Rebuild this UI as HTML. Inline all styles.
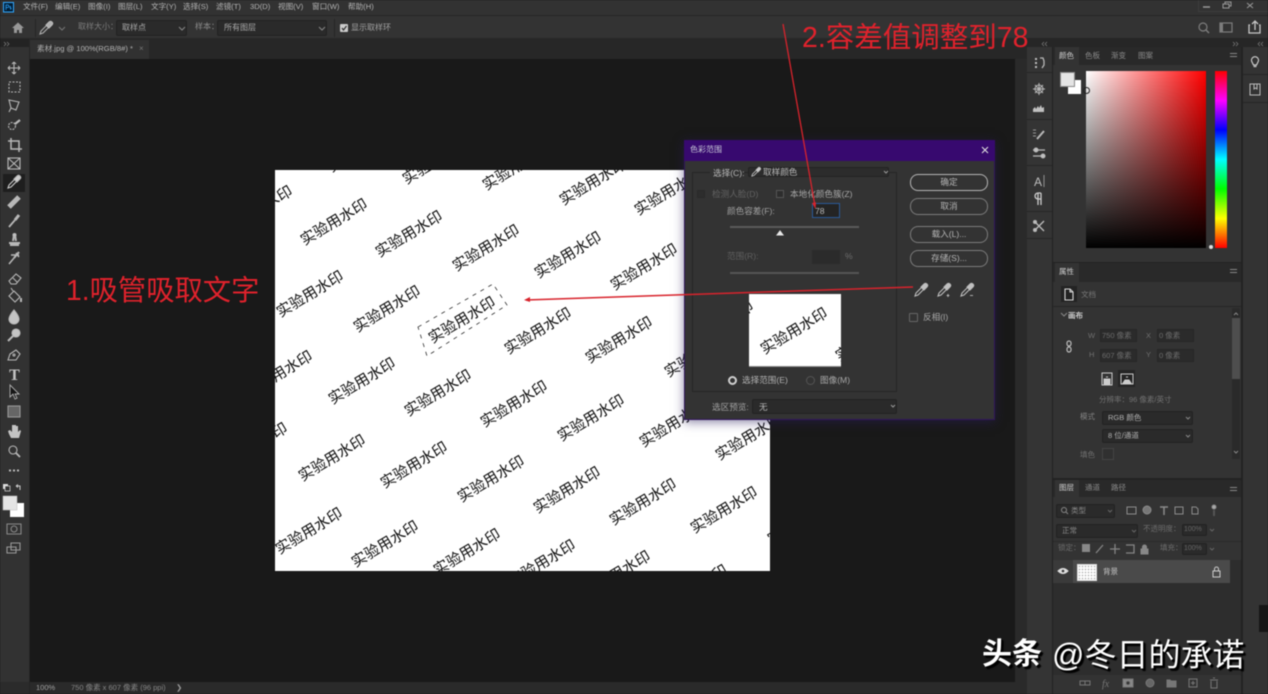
<!DOCTYPE html>
<html lang="zh"><head><meta charset="utf-8"><title>Photoshop 色彩范围</title>
<style>
html,body{margin:0;padding:0;background:#191919;}
body{width:1268px;height:694px;overflow:hidden;position:relative;font-family:"Liberation Sans","Noto Sans CJK SC",sans-serif;}
#r{position:absolute;left:0;top:0;width:1268px;height:694px;overflow:hidden;filter:blur(.4px);}
.b{position:absolute;box-sizing:border-box;}
.t{position:absolute;white-space:nowrap;line-height:12px;font-size:8px;color:#a8a8a8;}
.d{font-size:8.6px;}
.m{color:#b4b4b4;font-size:7.6px;top:1px;}
.s{position:absolute;box-sizing:border-box;background:#2a2a2a;border:1px solid #222;border-radius:2px;}
.btn{position:absolute;box-sizing:border-box;left:910px;width:78px;height:17px;border:1px solid #7c7c7c;border-radius:8px;text-align:center;line-height:15px;font-size:8.6px;color:#b4b4b4;}
.f{position:absolute;box-sizing:border-box;background:#2b2b2b;border:1px solid #262626;}
svg{position:absolute;left:0;top:0;}
</style></head><body><div id="r">

<!-- top bars -->
<div class="b" style="left:0;top:0;width:1268px;height:15px;background:#323232"></div>
<div class="b" style="left:0;top:15px;width:1268px;height:1px;background:#262626"></div>
<div class="b" style="left:0;top:16px;width:1268px;height:23px;background:#333"></div>
<div class="b" style="left:0;top:38px;width:1268px;height:21px;background:#272727"></div>
<div class="b" style="left:30px;top:40px;width:119px;height:19px;background:#313131"></div>
<div class="b" style="left:35px;top:19px;width:1px;height:18px;background:#262626"></div>
<div class="b" style="left:334px;top:19px;width:1px;height:18px;background:#262626"></div>
<div class="b" style="left:1198px;top:0;width:70px;height:12px;border-left:1px solid #3d3d3d;border-bottom:1px solid #3d3d3d"></div>

<!-- left toolbar -->
<div class="b" style="left:0;top:47px;width:29px;height:635px;background:#323232"></div>
<div class="b" style="left:0;top:39px;width:29px;height:8px;background:#232323"></div>
<div class="b" style="left:29px;top:47px;width:1px;height:647px;background:#252525"></div>
<div class="b" style="left:3px;top:174px;width:22px;height:18px;background:#1e1e1e"></div>
<div class="b" style="left:0;top:682px;width:29px;height:12px;background:#2b2b2b"></div>

<!-- status bar -->
<div class="b" style="left:30px;top:682px;width:985px;height:12px;background:#2a2a2a"></div>
<div class="t" style="left:36px;top:682px;font-size:7.5px;color:#a0a0a0">100%</div>
<div class="t" style="left:71px;top:682px;font-size:7.5px;color:#858585">750 像素 x 607 像素 (96 ppi)</div>
<div class="t" style="left:176px;top:682px;font-size:7.5px;color:#999">❯</div>

<!-- right side -->
<div class="b" style="left:1015px;top:59px;width:12px;height:635px;background:#2a2a2a"></div>
<div class="b" style="left:1015px;top:38px;width:253px;height:9px;background:#262626"></div>
<div class="b" style="left:1027px;top:47px;width:25px;height:647px;background:#343434"></div>
<div class="b" style="left:1052px;top:47px;width:1px;height:647px;background:#212121"></div>
<div class="b" style="left:1053px;top:47px;width:188px;height:647px;background:#333"></div>
<div class="b" style="left:1241px;top:47px;width:2px;height:647px;background:#222"></div>
<div class="b" style="left:1243px;top:47px;width:25px;height:647px;background:#333"></div>
<div class="b" style="left:1027px;top:72px;width:25px;height:1px;background:#262626"></div>
<div class="b" style="left:1027px;top:119px;width:25px;height:1px;background:#262626"></div>
<div class="b" style="left:1027px;top:165px;width:25px;height:1px;background:#262626"></div>
<div class="b" style="left:1027px;top:211px;width:25px;height:1px;background:#262626"></div>
<div class="b" style="left:1027px;top:238px;width:25px;height:1px;background:#262626"></div>
<div class="b" style="left:1243px;top:74px;width:25px;height:1px;background:#262626"></div>
<div class="b" style="left:1243px;top:102px;width:25px;height:1px;background:#262626"></div>
<div class="b" style="left:1259px;top:605px;width:9px;height:27px;background:#161616"></div>

<!-- colour panel -->
<div class="b" style="left:1053px;top:47px;width:188px;height:18px;background:#292929"></div>
<div class="b" style="left:1055px;top:47px;width:24px;height:18px;background:#333"></div>
<div class="t" style="left:1059px;top:50px;font-size:7.5px;color:#d0d0d0">颜色</div>
<div class="t" style="left:1085px;top:50px;font-size:7.5px;color:#8a8a8a">色板</div>
<div class="t" style="left:1111px;top:50px;font-size:7.5px;color:#8a8a8a">渐变</div>
<div class="t" style="left:1138px;top:50px;font-size:7.5px;color:#8a8a8a">图案</div>
<div class="b" style="left:1068px;top:80px;width:13px;height:14px;background:#fff"></div>
<div class="b" style="left:1060px;top:72px;width:15px;height:15px;background:#e4e4e4;border:1px solid #8a8a8a"></div>
<div class="b" style="left:1086px;top:71px;width:120px;height:177px;background:linear-gradient(to bottom,rgba(0,0,0,0),#000),linear-gradient(to right,#fff,#f00)"></div>
<div class="b" style="left:1215px;top:71px;width:12px;height:177px;background:linear-gradient(to bottom,#f00,#f0f 16.6%,#00f 33.3%,#0ff 50%,#0f0 66.6%,#ff0 83.3%,#f00)"></div>
<div class="b" style="left:1209px;top:245px;width:4px;height:4px;background:#ddd;border-radius:2px"></div>
<div class="b" style="left:1083px;top:87px;width:7px;height:7px;border:1px solid #222;border-radius:50%"></div>

<!-- properties panel -->
<div class="b" style="left:1053px;top:262px;width:188px;height:1px;background:#222"></div>
<div class="b" style="left:1053px;top:263px;width:188px;height:19px;background:#292929"></div>
<div class="b" style="left:1055px;top:263px;width:24px;height:19px;background:#333"></div>
<div class="t" style="left:1059px;top:266px;font-size:7.5px;color:#d0d0d0">属性</div>
<div class="b" style="left:1061px;top:286px;width:16px;height:16px;background:#232323"></div>
<div class="t" style="left:1081px;top:289px;font-size:7.5px;color:#777">文档</div>
<div class="b" style="left:1053px;top:306px;width:188px;height:1px;background:#262626"></div>
<div class="t" style="left:1068px;top:310px;font-size:7.5px;color:#c8c8c8;font-weight:bold">画布</div>
<div class="t" style="left:1088px;top:330px;font-size:7.5px;color:#707070">W</div>
<div class="f" style="left:1100px;top:329px;width:37px;height:13px"></div>
<div class="t" style="left:1102px;top:330px;font-size:7.5px;color:#6c6c6c">750 像素</div>
<div class="t" style="left:1146px;top:330px;font-size:7.5px;color:#707070">X</div>
<div class="f" style="left:1157px;top:329px;width:37px;height:13px"></div>
<div class="t" style="left:1159px;top:330px;font-size:7.5px;color:#6c6c6c">0 像素</div>
<div class="t" style="left:1089px;top:349px;font-size:7.5px;color:#707070">H</div>
<div class="f" style="left:1100px;top:349px;width:37px;height:13px"></div>
<div class="t" style="left:1102px;top:350px;font-size:7.5px;color:#6c6c6c">607 像素</div>
<div class="t" style="left:1146px;top:349px;font-size:7.5px;color:#707070">Y</div>
<div class="f" style="left:1157px;top:349px;width:37px;height:13px"></div>
<div class="t" style="left:1159px;top:350px;font-size:7.5px;color:#6c6c6c">0 像素</div>
<div class="b" style="left:1118px;top:370px;width:17px;height:17px;background:#252525"></div>
<div class="t" style="left:1099px;top:394px;font-size:7.5px;color:#737373">分辨率：96 像素/英寸</div>
<div class="t" style="left:1080px;top:411px;font-size:7.5px;color:#858585">模式</div>
<div class="s" style="left:1102px;top:411px;width:91px;height:14px"></div>
<div class="t" style="left:1108px;top:412px;font-size:7.5px;color:#b0b0b0">RGB 颜色</div>
<div class="s" style="left:1102px;top:429px;width:91px;height:14px"></div>
<div class="t" style="left:1108px;top:430px;font-size:7.5px;color:#b0b0b0">8 位/通道</div>
<div class="t" style="left:1080px;top:449px;font-size:7.5px;color:#707070">填色</div>
<div class="b" style="left:1102px;top:448px;width:12px;height:12px;border:1px solid #444;background:#303030"></div>
<div class="b" style="left:1232px;top:308px;width:8px;height:151px;background:#2a2a2a"></div>
<div class="b" style="left:1232px;top:318px;width:8px;height:61px;background:#4e4e4e"></div>

<!-- layers panel -->
<div class="b" style="left:1053px;top:478px;width:188px;height:2px;background:#222"></div>
<div class="b" style="left:1053px;top:480px;width:188px;height:17px;background:#292929"></div>
<div class="b" style="left:1055px;top:480px;width:24px;height:17px;background:#333"></div>
<div class="t" style="left:1059px;top:482px;font-size:7.5px;color:#d0d0d0">图层</div>
<div class="t" style="left:1085px;top:482px;font-size:7.5px;color:#8a8a8a">通道</div>
<div class="t" style="left:1111px;top:482px;font-size:7.5px;color:#8a8a8a">路径</div>
<div class="s" style="left:1056px;top:504px;width:59px;height:14px"></div>
<div class="t" style="left:1071px;top:505px;font-size:7.5px;color:#8a8a8a">类型</div>
<div class="s" style="left:1056px;top:524px;width:82px;height:14px"></div>
<div class="t" style="left:1062px;top:525px;font-size:7.5px;color:#8a8a8a">正常</div>
<div class="t" style="left:1143px;top:523px;font-size:7.5px;color:#6c6c6c">不透明度：</div>
<div class="s" style="left:1182px;top:524px;width:25px;height:12px"></div>
<div class="t" style="left:1184px;top:524px;font-size:7px;color:#666">100%</div>
<div class="b" style="left:1053px;top:541px;width:188px;height:1px;background:#2a2a2a"></div>
<div class="t" style="left:1058px;top:542px;font-size:7.5px;color:#6c6c6c">锁定：</div>
<div class="t" style="left:1160px;top:542px;font-size:7.5px;color:#6c6c6c">填充：</div>
<div class="s" style="left:1182px;top:543px;width:25px;height:12px"></div>
<div class="t" style="left:1184px;top:543px;font-size:7px;color:#666">100%</div>
<div class="b" style="left:1053px;top:560px;width:188px;height:122px;background:#2d2d2d"></div>
<div class="b" style="left:1053px;top:560px;width:20px;height:23px;background:#3a3a3a"></div>
<div class="b" style="left:1073px;top:560px;width:157px;height:23px;background:#4a4a4a"></div>
<div class="b" style="left:1077px;top:564px;width:20px;height:17px;background:#fff radial-gradient(circle,#aaa 0 .6px,transparent .9px) 0 0/3px 3px;border:1px solid #ddd"></div>
<div class="t" style="left:1103px;top:566px;font-size:7.5px;color:#c8c8c8">背景</div>
<div class="b" style="left:1053px;top:675px;width:188px;height:19px;background:#333"></div>

<!-- document -->
<div class="t" style="left:37px;top:43px;font-size:7.6px;color:#b4b4b4">素材.jpg @ 100%(RGB/8#) *</div>
<div class="t" style="left:139px;top:43px;font-size:8px;color:#777">×</div>

<!-- menu -->
<div class="t m" style="left:23px">文件(F)</div><div class="t m" style="left:55px">编辑(E)</div><div class="t m" style="left:88px">图像(I)</div><div class="t m" style="left:118px">图层(L)</div><div class="t m" style="left:151px">文字(Y)</div><div class="t m" style="left:183px">选择(S)</div><div class="t m" style="left:216px">滤镜(T)</div><div class="t m" style="left:250px">3D(D)</div><div class="t m" style="left:278px">视图(V)</div><div class="t m" style="left:312px">窗口(W)</div><div class="t m" style="left:348px">帮助(H)</div>

<!-- options -->
<div class="t" style="left:78px;top:21px;font-size:8px;color:#7d7d7d">取样大小：</div>
<div class="s" style="left:116px;top:20px;width:71px;height:16px"></div>
<div class="t" style="left:122px;top:22px;font-size:8px;color:#aaa">取样点</div>
<div class="t" style="left:195px;top:21px;font-size:8px;color:#8e8e8e">样本：</div>
<div class="s" style="left:217px;top:20px;width:110px;height:16px"></div>
<div class="t" style="left:224px;top:22px;font-size:8px;color:#aaa">所有图层</div>
<div class="b" style="left:340px;top:24px;width:8px;height:8px;background:#ccc;border-radius:1px"></div>
<div class="t" style="left:351px;top:22px;font-size:8px;color:#a2a2a2">显示取样环</div>

<!-- image + overlay svg -->
<svg width="1268" height="694" viewBox="0 0 1268 694">
<defs>
<g id="dr"><path d="M-6 6l1-3 5.500-5.500 2 2L-3 5z" fill="none" stroke="currentColor" stroke-width="1.100"/><path d="M0-3L3-6q1.500-1.500 3 0t0 3L3 0z" fill="currentColor"/></g>
</defs>
<svg x="275" y="170" width="495" height="401" viewBox="275 170 495 401">
<rect x="275" y="170" width="495" height="401" fill="#fff"/>
<g font-family="'Noto Sans CJK SC',sans-serif" font-size="15" fill="#0c0c0c" text-anchor="middle">
<text transform="translate(361 149) rotate(-31)" dy="5">实验用水印</text>
<text transform="translate(436 161) rotate(-31)" dy="5">实验用水印</text>
<text transform="translate(516 167) rotate(-31)" dy="5">实验用水印</text>
<text transform="translate(593 182) rotate(-31)" dy="5">实验用水印</text>
<text transform="translate(668 192) rotate(-31)" dy="5">实验用水印</text>
<text transform="translate(259 209) rotate(-31)" dy="5">实验用水印</text>
<text transform="translate(334 222) rotate(-31)" dy="5">实验用水印</text>
<text transform="translate(409 234) rotate(-31)" dy="5">实验用水印</text>
<text transform="translate(486 248) rotate(-31)" dy="5">实验用水印</text>
<text transform="translate(568 255) rotate(-31)" dy="5">实验用水印</text>
<text transform="translate(644 267) rotate(-31)" dy="5">实验用水印</text>
<text transform="translate(310 294) rotate(-31)" dy="5">实验用水印</text>
<text transform="translate(387 309) rotate(-31)" dy="5">实验用水印</text>
<text transform="translate(462 320) rotate(-31)" dy="5">实验用水印</text>
<text transform="translate(538 331) rotate(-31)" dy="5">实验用水印</text>
<text transform="translate(619 340) rotate(-31)" dy="5">实验用水印</text>
<text transform="translate(698 354) rotate(-31)" dy="5">实验用水印</text>
<text transform="translate(279 374) rotate(-31)" dy="5">实验用水印</text>
<text transform="translate(362 381) rotate(-31)" dy="5">实验用水印</text>
<text transform="translate(438 393) rotate(-31)" dy="5">实验用水印</text>
<text transform="translate(514 404) rotate(-31)" dy="5">实验用水印</text>
<text transform="translate(591 418) rotate(-31)" dy="5">实验用水印</text>
<text transform="translate(673 424) rotate(-31)" dy="5">实验用水印</text>
<text transform="translate(749 437) rotate(-31)" dy="5">实验用水印</text>
<text transform="translate(254 446) rotate(-31)" dy="5">实验用水印</text>
<text transform="translate(332 458) rotate(-31)" dy="5">实验用水印</text>
<text transform="translate(414 465) rotate(-31)" dy="5">实验用水印</text>
<text transform="translate(491 479) rotate(-31)" dy="5">实验用水印</text>
<text transform="translate(567 490) rotate(-31)" dy="5">实验用水印</text>
<text transform="translate(643 502) rotate(-31)" dy="5">实验用水印</text>
<text transform="translate(724 510) rotate(-31)" dy="5">实验用水印</text>
<text transform="translate(801 521) rotate(-31)" dy="5">实验用水印</text>
<text transform="translate(309 531) rotate(-31)" dy="5">实验用水印</text>
<text transform="translate(385 544) rotate(-31)" dy="5">实验用水印</text>
<text transform="translate(467 552) rotate(-31)" dy="5">实验用水印</text>
<text transform="translate(542 563) rotate(-31)" dy="5">实验用水印</text>
<text transform="translate(617 574) rotate(-31)" dy="5">实验用水印</text>
<text transform="translate(694 588) rotate(-31)" dy="5">实验用水印</text>
</g>
<polygon points="418,327 493,284 507,305 427,356" fill="none" stroke="#111" stroke-width=".7" stroke-dasharray="4 5"/>
</svg>
</svg>

<!-- dialog -->
<div class="b" style="left:684px;top:140px;width:311px;height:280px;background:#333;border:1px solid #31155c;box-shadow:0 2px 10px rgba(40,30,90,.55)"></div>
<div class="b" style="left:684px;top:140px;width:311px;height:21px;background:#37096f"></div>
<div class="t" style="left:690px;top:144px;font-size:8px;color:#c8c8d8">色彩范围</div>
<div class="b" style="left:692px;top:172px;width:205px;height:220px;border:1px solid #262626"></div>
<div class="b" style="left:710px;top:166px;width:34px;height:12px;background:#333"></div>
<div class="t d" style="left:713px;top:167px;color:#b4b4b4">选择(C):</div>
<div class="s" style="left:748px;top:167px;width:141px;height:10px;background:#2c2c2c"></div>
<div class="t d" style="left:763px;top:166px;color:#b8b8b8">取样颜色</div>
<div class="b" style="left:697px;top:190px;width:8px;height:8px;border:1px solid #2a2a2a;background:#2d2d2d"></div>
<div class="t d" style="left:712px;top:188px;color:#626262">检测人脸(D)</div>
<div class="b" style="left:776px;top:190px;width:8px;height:8px;border:1px solid #555;background:#2d2d2d"></div>
<div class="t d" style="left:790px;top:188px;color:#a8a8a8">本地化颜色簇(Z)</div>
<div class="t d" style="left:727px;top:205px;color:#a0a0a0">颜色容差(F):</div>
<div class="b" style="left:812px;top:203px;width:28px;height:15px;background:#242424;border:1px solid #2a5a98"></div>
<div class="t d" style="left:815px;top:205px;color:#b8b8b8">78</div>
<div class="b" style="left:730px;top:226px;width:129px;height:2px;background:#5a5a5a"></div>
<div class="t d" style="left:727px;top:250px;color:#5f5f5f">范围(R):</div>
<div class="b" style="left:812px;top:250px;width:28px;height:14px;background:#2b2b2b"></div>
<div class="t d" style="left:845px;top:250px;color:#6c6c6c">%</div>
<div class="b" style="left:730px;top:272px;width:129px;height:2px;background:#555"></div>
<div class="b" style="left:749px;top:294px;width:92px;height:73px;background:#fff;border-bottom:1px solid #888"></div>
<svg width="1268" height="694" viewBox="0 0 1268 694">
<svg x="749" y="294" width="92" height="72" viewBox="749 294 92 72">
<g font-family="'Noto Sans CJK SC',sans-serif" font-size="15" fill="#0c0c0c" text-anchor="middle">
<text transform="translate(794 331) rotate(-31)" dy="5">实验用水印</text>
<text transform="translate(720 324) rotate(-31)" dy="5">实验用水印</text>
<text transform="translate(869 338) rotate(-31)" dy="5">实验用水印</text>
</g></svg>
</svg>
<div class="b" style="left:728px;top:376px;width:9px;height:9px;border-radius:50%;border:2.5px solid #d0d0d0;background:#333"></div>
<div class="t d" style="left:742px;top:374px;color:#b0b0b0">选择范围(E)</div>
<div class="b" style="left:806px;top:376px;width:9px;height:9px;border-radius:50%;border:1px solid #555"></div>
<div class="t d" style="left:820px;top:374px;color:#a8a8a8">图像(M)</div>
<div class="t d" style="left:712px;top:401px;color:#a0a0a0">选区预览:</div>
<div class="s" style="left:752px;top:399px;width:145px;height:15px"></div>
<div class="t d" style="left:759px;top:401px;color:#b8b8b8">无</div>
<div class="btn" style="top:174px;border-color:#b5b5b5">确定</div>
<div class="btn" style="top:198px">取消</div>
<div class="btn" style="top:226px">载入(L)...</div>
<div class="btn" style="top:250px">存储(S)...</div>
<div class="b" style="left:909px;top:313px;width:9px;height:9px;border:1px solid #666;border-radius:1px"></div>
<div class="t d" style="left:923px;top:311px;color:#a8a8a8">反相(I)</div>

<!-- icons + annotations -->
<svg width="1268" height="694" viewBox="0 0 1268 694" fill="none" stroke="#bdbdbd" color="#bdbdbd">
<rect x="3.500" y="2.500" width="10" height="9.500" stroke="#31a8ff" fill="#001e36"/>
<path d="M6 10V5h1.500q1.300 0 1.300 1.300T7.500 7.500H6M11 6.500H10v1.300h1v1.200h-1" stroke="#31a8ff" stroke-width=".7"/>
<path d="M12 28l6-5.500 6 5.500h-2v5h-3v-3h-2v3h-3v-5z" fill="#989898" stroke="none"/>
<use href="#dr" transform="translate(46 28)" color="#b0b0b0"/>
<path d="M59 27l3 3 3-3" stroke="#777"/>
<path d="M179 27l3 3 3-3M319 27l3 3 3-3" stroke="#888"/>
<path d="M342 28l1.500 2 3-4" stroke="#333" stroke-width="1.200"/>
<path d="M1203 7h7" stroke="#999" stroke-width="1.500"/>
<path d="M1223 4h6v4h-6zM1225 4V2h6v4h-2" stroke="#999"/>
<path d="M1247 3l6 5M1253 3l-6 5" stroke="#999"/>
<circle cx="1203" cy="27" r="4" stroke="#7d7d7d" stroke-width="1.200"/><path d="M1206 30l3 3" stroke="#7d7d7d" stroke-width="1.500"/>
<rect x="1220" y="23" width="12" height="9" stroke="#7d7d7d" stroke-width="1.200"/><rect x="1220" y="23" width="3" height="9" fill="#7d7d7d" stroke="none"/>
<path d="M1250 25h-1v8h11v-8h-1M1255 30v-8M1252 24l3-3 3 3" stroke="#c8c8c8" stroke-width="1.300"/>
<path d="M1044 42l-2 2 2 2M1047 42l-2 2 2 2M1233 42l2 2-2 2M1236 42l2 2-2 2M1260 42l-2 2 2 2M1263 42l-2 2 2 2M4 42l2 2-2 2M7 42l2 2-2 2" stroke="#888" stroke-width=".6"/>
<path d="M1230 53.500h7M1230 56.500h7M1230 269.500h7M1230 272.500h7M1230 487.500h7M1230 490.500h7" stroke="#888"/>
<!-- tools -->
<g stroke="#b8b8b8" stroke-width="1.100">
<path d="M14 62v12M8 68h12M14 62l-2 2M14 62l2 2M14 74l-2-2M14 74l2-2M8 68l2-2M8 68l2 2M20 68l-2-2M20 68l-2 2"/>
<rect x="9" y="82" width="11" height="10" stroke-dasharray="2 1.500"/>
<path d="M9 100l10 2-3 8-5-2zM11 108l-2 4"/>
<circle cx="12" cy="126" r="3.500" stroke-dasharray="2 1"/><path d="M15 124l5-4" stroke-width="2.200"/>
<path d="M11 138v11h11M8 141h11v11" stroke-width="1.500"/>
<rect x="8" y="158" width="12" height="11"/><path d="M8 158l12 11M20 158l-12 11"/>
<use href="#dr" transform="translate(14 182)" color="#cfcfcf"/>
<path d="M9 207l10-10" stroke-width="5"/>
<path d="M9 227l6-7" stroke-width="1.800"/><path d="M15 220l4-5" stroke-width="3"/>
<path d="M10 245h9M9 243h11" stroke-width="2"/><path d="M13 241l1-6h1l1 6" stroke-width="2"/><circle cx="14.500" cy="235" r="1.500" fill="#c4c4c4"/>
<path d="M9 264l5-6M11 255l8 0M16 253l3 4" stroke-width="1.500"/><path d="M14 258l5-6" stroke-width="2"/>
<path d="M9 281l7-7 5 4-5 6h-5z"/><path d="M13 278l4 4" fill="#c4c4c4"/>
<path d="M9 296l5-5 6 6-5 5zM13 291l-2-3"/><path d="M21 298v4" stroke-width="2"/>
<path d="M14 310q5 6 5 9a5 5 0 0 1-10 0q0-3 5-9z" fill="#c4c4c4"/>
<circle cx="16" cy="333" r="4" fill="#c4c4c4"/><path d="M13 336l-5 5" stroke-width="2"/>
<path d="M8 360l2-6 6-4 4 4-4 6z"/><circle cx="14" cy="355" r="1"/>
<path d="M10 385v12l3-3 2 5 2-1-2-4h4z" fill="#161616" stroke="#b0b0b0" stroke-width=".9"/>
<rect x="8" y="406" width="12" height="11" fill="#666" stroke="#999"/>
<path d="M9 434l-1-3 2-1 2 2v-7h2v6-6h2v6-5h2v6l2-2 1 1-2 7h-8z" fill="#c4c4c4" stroke="none"/>
<circle cx="13" cy="450" r="4"/><path d="M16 453l4 4" stroke-width="1.800"/>
<path d="M9 470.500h2M13 470.500h2M17 470.500h2" stroke-width="2"/>
<path d="M7 524h14v10H7z" stroke="#888"/><circle cx="14" cy="529" r="3" stroke="#888"/>
<path d="M11 543h9v7h-9zM7 547h9v6H7z" stroke="#999"/>
</g>
<text x="14.500" y="380" text-anchor="middle" font-family="'Liberation Serif',serif" font-weight="bold" font-size="16" fill="#c4c4c4" stroke="none">T</text>
<rect x="3" y="484" width="5" height="5" fill="#ddd" stroke="none"/><rect x="5" y="486" width="5" height="5" fill="#333" stroke="#ddd" stroke-width=".7"/>
<path d="M16 486h4v4M16 486l2-1.500M16 486l2 1.500" stroke="#ccc"/>
<rect x="10" y="503" width="14" height="14" fill="#fff" stroke="none"/>
<rect x="3" y="496" width="14" height="14" fill="#e4e4e4" stroke="#bbb" stroke-width=".5"/>
<!-- dock icons -->
<g stroke="#b8b8b8">
<path d="M1035 58h2v2h-2zM1035 62h2v2h-2zM1035 66h2v2h-2z" fill="#c0c0c0" stroke="none"/>
<path d="M1040 58h3l1 3v4l-2 3" stroke-width="1.300"/>
<circle cx="1039" cy="89" r="4"/><path d="M1033 89h12M1039 83v12M1035 85l8 8M1043 85l-8 8"/>
<path d="M1033 112v-3l2-2 1 2 2-3 1 2 2-3 1 3 2-1v5z" fill="#c0c0c0" stroke="none"/>
<path d="M1033 130h3M1033 133h3M1033 136h3" stroke-width=".8"/><path d="M1037 139l7-8" stroke-width="2"/>
<path d="M1033 150h12M1033 156h12" stroke-width="1.200"/><circle cx="1036" cy="150" r="2" fill="#c0c0c0"/><circle cx="1043" cy="156" r="2" fill="#c0c0c0"/>
</g>
<text x="1034" y="186" font-size="12" fill="#bdbdbd" stroke="none" font-family="'Liberation Sans',sans-serif">A</text>
<path d="M1044 175v12" stroke="#aaa" stroke-width=".8"/>
<path d="M1038 193v12M1041 193v12M1041 193h-3a3 3 0 0 0 0 6h3" stroke="#ccc" stroke-width="1.300"/>
<path d="M1034 221l10 10M1044 221l-10 10" stroke="#bbb" stroke-width="1.300"/><circle cx="1035" cy="222" r="2" fill="#bbb" stroke="none"/><circle cx="1035" cy="230" r="2" fill="#bbb" stroke="none"/>
<path d="M1252 62a3.500 3.500 0 1 1 6 0l-1.500 3h-3zM1253.500 66.500h3" stroke="#ccc" stroke-width="1.200"/>
<path d="M1250 84h10v11h-10zM1254 84v5l1.500-1 1.500 1v-5" stroke="#bbb"/>
<!-- props icons -->
<path d="M1065 289h5l3 3v8h-8zM1070 289v3h3" stroke="#d8d8d8" stroke-width="1.100"/>
<path d="M1061 313l3 3 3-3" stroke="#888"/>
<rect x="1067" y="341" width="4" height="5" rx="2" stroke="#bbb" stroke-width="1.200"/><rect x="1067" y="347" width="4" height="5" rx="2" stroke="#bbb" stroke-width="1.200"/>
<rect x="1102" y="373" width="10" height="12" stroke="#ccc"/><path d="M1104 384v-5h6v5zM1106 377h2" fill="#ccc" stroke="#ccc"/>
<rect x="1121" y="374" width="12" height="10" stroke="#ccc"/><path d="M1123 383l2-3h4l2 3zM1126 377h2" fill="#ccc" stroke="#ccc"/>
<path d="M1186 417l2 2 2-2M1186 435l2 2 2-2M1234 315l2-2 2 2M1234 451l2 2 2-2" stroke="#888"/>
<!-- layers icons -->
<circle cx="1064" cy="510" r="2.500" stroke="#888"/><path d="M1066 512l2 2" stroke="#888"/>
<path d="M1108 510l2 2 2-2M1132 530l2 2 2-2M1210 529l2 2 2-2M1210 548l2 2 2-2" stroke="#666"/>
<g stroke="#8c8c8c">
<rect x="1127" y="507" width="9" height="7"/><circle cx="1147" cy="510" r="4" fill="#777"/><path d="M1160 507h8M1164 507v8" stroke-width="1.500"/><rect x="1175" y="507" width="8" height="7"/><path d="M1192 514v-7h4l2 2v5z"/><circle cx="1214" cy="507" r="2" fill="#aaa"/><path d="M1214 510v6" stroke="#555" stroke-width="2"/>
</g>
<rect x="1082" y="544" width="8" height="8" fill="#888" stroke="none"/>
<path d="M1096 553l7-8M1110 549h10M1115 544v10M1126 545h8v8h-8" stroke="#858585" stroke-width="1.300"/>
<path d="M1141 549h7v5h-7zM1142.500 549v-2a2 2 0 0 1 4 0v2" fill="#888" stroke="#888"/>
<path d="M1058 571q5-5 10 0q-5 5-10 0z" fill="#ddd" stroke="#ddd"/><circle cx="1063" cy="571" r="1.300" fill="#333" stroke="none"/>
<path d="M1213 571h7v6h-7zM1214.500 571v-2a2 2 0 0 1 4 0v2" stroke="#ccc"/>
<g stroke="#777">
<path d="M1080 681h5v4h-5zM1085 681h5v4h-5z"/>
<rect x="1123" y="679" width="10" height="8" fill="#888"/><circle cx="1128" cy="683" r="2" fill="#333"/>
<circle cx="1150" cy="683" r="4" fill="#666"/>
<path d="M1167 680h3l1 1h5v6h-9z" fill="#777"/>
<rect x="1189" y="679" width="8" height="8"/><path d="M1193 681v4M1191 683h4"/>
<path d="M1210 680h8M1211 681v7h6v-7M1213 678h2"/>
</g>
<text x="1102" y="687" font-size="10" font-style="italic" fill="#777" stroke="none" font-family="'Liberation Serif',serif">fx</text>
<!-- dialog icons -->
<path d="M982 147l6 6M988 147l-6 6" stroke="#ddd" stroke-width="1.100"/>
<path d="M884 171l2 2 2-2M891 405l2 2 2-2" stroke="#999"/>
<use href="#dr" transform="translate(756 172) scale(.7)" color="#ccc"/>
<path d="M777 235l3-4 3 4z" fill="#e8e8e8" stroke="#e8e8e8"/>
<use href="#dr" transform="translate(921 290)" color="#c0c0c0"/>
<use href="#dr" transform="translate(944 290)" color="#c0c0c0"/><path d="M948 294v3M946.500 295.500h3" stroke="#ccc" stroke-width=".8"/>
<use href="#dr" transform="translate(967 290)" color="#c0c0c0"/><path d="M970 295.500h3" stroke="#ccc" stroke-width=".8"/>
<!-- annotation lines -->
<path d="M783 24L815 206" stroke="#d8232c" stroke-width="1.300"/>
<path d="M815.500 209l-3.500-6 4-.7z" fill="#d8232c" stroke="none"/>
<path d="M913 287L526 300" stroke="#d8232c" stroke-width="1.500"/>
<path d="M524 300l6-3v5z" fill="#d8232c" stroke="none"/>
</svg>

<!-- annotations -->
<div class="t" style="left:66px;top:270px;font-size:28.3px;line-height:40px;color:#e0222c">1.吸管吸取文字</div>
<div class="t" style="left:802px;top:18px;font-size:28.5px;line-height:40px;color:#e0222c">2.容差值调整到78</div>

<!-- watermark -->
<div class="t" style="left:982px;top:635px;font-size:30px;line-height:40px;color:#fff;font-weight:bold;text-shadow:1.5px 1.5px 0 #000,2px 2px 1px #000,2.5px 2.5px 1px #000">头条</div>
<div class="t" style="left:1052px;top:635px;font-size:32px;line-height:40px;color:#fff;text-shadow:1.5px 1.5px 0 #000,2px 2px 1px #000,2.5px 2.5px 1px #000">@冬日的承诺</div>

</div></body></html>
